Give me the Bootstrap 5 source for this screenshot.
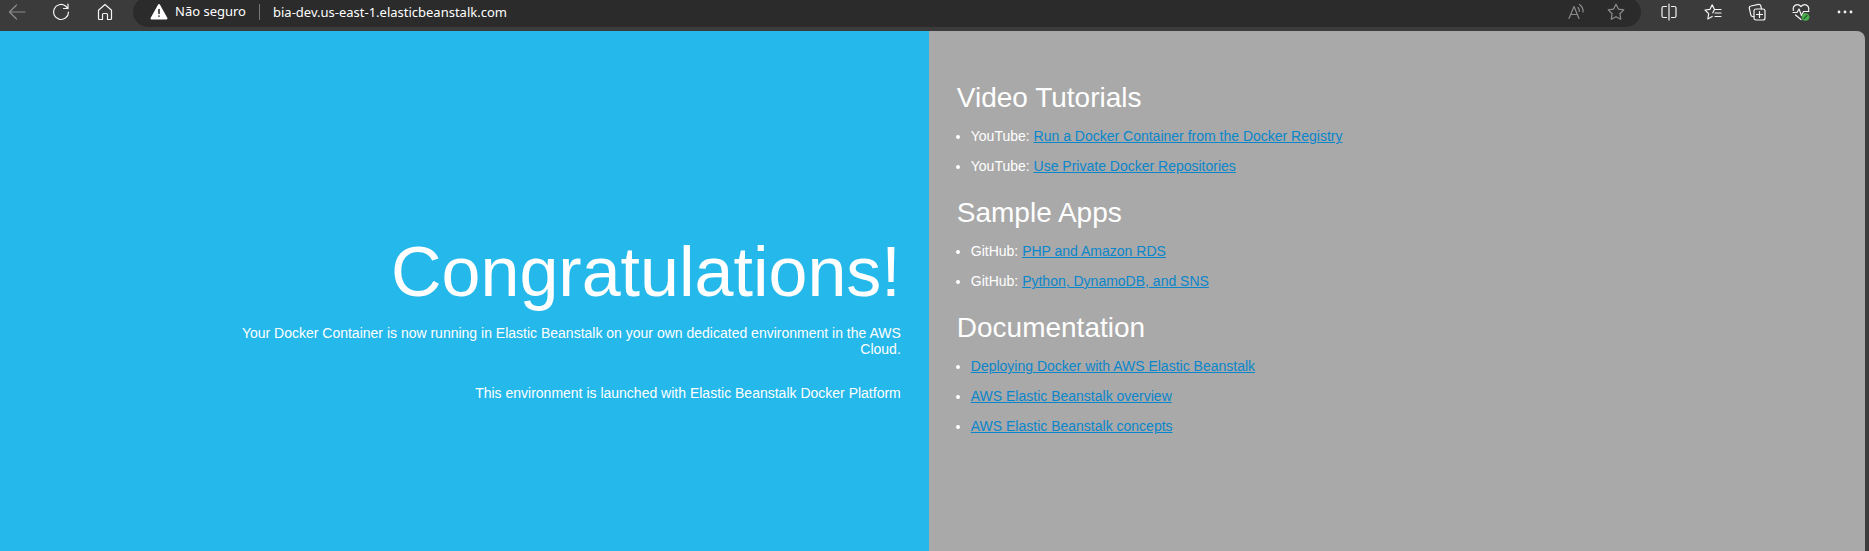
<!DOCTYPE html>
<html lang="en">
<head>
<meta charset="utf-8">
<meta name="viewport" content="width=device-width, initial-scale=1">
<title>Elastic Beanstalk</title>
<link href="https://cdn.jsdelivr.net/npm/bootstrap@5.3.0/dist/css/bootstrap.min.css" rel="stylesheet">
<style>
  body { background: #3b3b3b; font-family: "Liberation Sans", Arial, sans-serif; font-size: 14px; line-height: 16px; color: #fff; }
  .toolbar { height: 31px; padding: 0 7px 4px 0; gap: 10px; overflow: hidden; font-family: "Noto Sans", sans-serif; }
  .tool { width: 34px; height: 30px; color: #f4f4f4; }
  .tool svg, .warn svg { width: 18px; height: 18px; fill: none; stroke: currentColor; stroke-width: 1.2; stroke-linecap: round; stroke-linejoin: round; }
  .tool.dim { color: #8c8c8c; }
  .address { height: 30px; border-radius: 15px; background: #2b2b2b; margin: 0 1px; padding: 0 8px 0 17px; color: #fff; }
  .address-actions { gap: 6px; }
  .warn { gap: 7px; font-size: 13px; color: #fff; }
  .divider { width: 1px; height: 16px; background: #777; margin: 0 13px; }
  .url { color: #fff; font-size: 13px; outline: 0; min-width: 0; }
  .viewport-area { margin-right: 4px; border-top-right-radius: 8px; overflow: hidden; background: #a9a9a9; }
  .hello { width: 49.8%; background: #25b8eb; padding: 201px 28px 28px 232px; text-align: right; }
  .hello h1 { font-size: 70px; line-height: 80px; font-weight: 400; margin: 0 0 13px; }
  .hello p { margin: 0 0 28px; }
  .resources { padding: 51px 28px 28px; }
  .resources h2 { font-size: 28px; line-height: 32px; font-weight: 400; margin: 0 0 14px; }
  .resources ul { margin: 0 0 23px; padding-left: 14px; }
  .resources li + li { margin-top: 14px; }
  .resources a { color: #0a86cb; }
</style>
</head>
<body class="d-flex flex-column min-vh-100">
<header class="toolbar d-flex align-items-end flex-shrink-0">
  <button class="tool dim btn p-0 border-0 d-flex align-items-center justify-content-center" aria-label="Back"><svg viewBox="0 0 18 18"><path d="M17 9H1.500M8.500 2 1.500 9l7 7"/></svg></button>
  <button class="tool btn p-0 border-0 d-flex align-items-center justify-content-center" aria-label="Reload"><svg viewBox="0 0 18 18"><path d="M16.500 9A7.500 7.500 0 1 1 13.500 3L16 5.500M16 1v4.500h-4.500"/></svg></button>
  <button class="tool btn p-0 border-0 d-flex align-items-center justify-content-center" aria-label="Home"><svg viewBox="0 0 18 18"><path d="M2.500 7.300 9 1.500l6.500 5.800V15.500a1 1 0 0 1-1 1H11.500v-5a1 1 0 0 0-1-1h-3a1 1 0 0 0-1 1v5H3.500a1 1 0 0 1-1-1z"/></svg></button>
  <div class="address d-flex align-items-center flex-grow-1">
    <button class="warn btn p-0 border-0 d-flex align-items-center text-nowrap"><svg viewBox="0 0 18 18"><path d="M9 2 16.500 15.500h-15z" fill="#fff" stroke-width="2"/><path d="M9 6.500v4M9 13v.2" stroke="#2b2b2b" stroke-width="1.600"/></svg>Não seguro</button>
    <span class="divider"></span>
    <input class="url flex-grow-1 bg-transparent border-0 p-0" type="text" aria-label="Address" value="bia-dev.us-east-1.elasticbeanstalk.com">
    <div class="address-actions d-flex">
      <button class="tool dim btn p-0 border-0 d-flex align-items-center justify-content-center" aria-label="Read aloud"><svg viewBox="0 0 18 18"><path d="m2 15.500 5-12 5 12M3.700 11.500h6.600M11 4.500q1.500 1.500 1.300 4M12.500 1.500q4 3 3.500 7.500"/></svg></button>
      <button class="tool dim btn p-0 border-0 d-flex align-items-center justify-content-center" aria-label="Add to favorites"><svg viewBox="0 0 18 18"><path d="m9 1.200 2.400 4.900 5.400.8-3.900 3.800.9 5.500L9 13.700 4.200 16.200l.9-5.500L1.200 6.900l5.400-.8z"/></svg></button>
    </div>
  </div>
  <button class="tool btn p-0 border-0 d-flex align-items-center justify-content-center" aria-label="Split screen"><svg viewBox="0 0 18 18"><path d="M9 1v16M6.500 3.500h-3a1.500 1.500 0 0 0-1.500 1.500v8a1.500 1.500 0 0 0 1.500 1.500h3M11.500 3.500h3a1.500 1.500 0 0 1 1.500 1.500v8a1.500 1.500 0 0 1-1.500 1.500h-3"/></svg></button>
  <button class="tool btn p-0 border-0 d-flex align-items-center justify-content-center" aria-label="Favorites"><svg viewBox="0 0 18 18"><path d="M10.500 6.500 8.200 1.800 6 6.300l-5 .7 3.700 3.700-.9 5.300 4.400-2.500M10.500 6.500h6.500M11 10h6M11 13.500h6M10.500 6.500 8.800 9.800"/></svg></button>
  <button class="tool btn p-0 border-0 d-flex align-items-center justify-content-center" aria-label="Collections"><svg viewBox="0 0 18 18"><rect x="6" y="6" width="11" height="11" rx="2"/><path d="M11.500 8.500v6M8.500 11.500h6M13.500 6 12.800 3A2 2 0 0 0 10.500 1.300L3 3A2 2 0 0 0 1.300 5.200l1.500 6.600A2 2 0 0 0 4.500 13.500H6"/></svg></button>
  <button class="tool btn p-0 border-0 d-flex align-items-center justify-content-center" aria-label="Browser essentials"><svg viewBox="0 0 18 18"><path d="M1.500 7.500C0 2.500 5.500-.5 9 3.500 12.500-.5 18 2.500 16.500 7.500M1 9.500h4l2-3.500 2.500 6.500 2-4h5.500M3.500 12 9 16.500"/><circle cx="13.500" cy="14" r="3.600" fill="#4caf50" stroke="#4caf50" stroke-width=".6"/><path d="m12 15.500 3-3" stroke="#24602a"/></svg></button>
  <button class="tool btn p-0 border-0 d-flex align-items-center justify-content-center" aria-label="Settings and more"><svg viewBox="0 0 18 18"><g fill="currentColor" stroke="none"><circle cx="3" cy="9" r="1.400"/><circle cx="9" cy="9" r="1.400"/><circle cx="15" cy="9" r="1.400"/></g></svg></button>
</header>
<main class="viewport-area d-flex flex-grow-1">
  <section class="hello flex-shrink-0">
    <h1>Congratulations!</h1>
    <p>Your Docker Container is now running in Elastic Beanstalk on your own dedicated environment in the AWS Cloud.</p>
    <p>This environment is launched with Elastic Beanstalk Docker Platform</p>
  </section>
  <section class="resources flex-grow-1">
    <h2>Video Tutorials</h2>
    <ul>
      <li>YouTube: <a href="#">Run a Docker Container from the Docker Registry</a></li>
      <li>YouTube: <a href="#">Use Private Docker Repositories</a></li>
    </ul>
    <h2>Sample Apps</h2>
    <ul>
      <li>GitHub: <a href="#">PHP and Amazon RDS</a></li>
      <li>GitHub: <a href="#">Python, DynamoDB, and SNS</a></li>
    </ul>
    <h2>Documentation</h2>
    <ul>
      <li><a href="#">Deploying Docker with AWS Elastic Beanstalk</a></li>
      <li><a href="#">AWS Elastic Beanstalk overview</a></li>
      <li><a href="#">AWS Elastic Beanstalk concepts</a></li>
    </ul>
  </section>
</main>
<script src="https://cdn.jsdelivr.net/npm/bootstrap@5.3.0/dist/js/bootstrap.bundle.min.js"></script>
</body>
</html>
